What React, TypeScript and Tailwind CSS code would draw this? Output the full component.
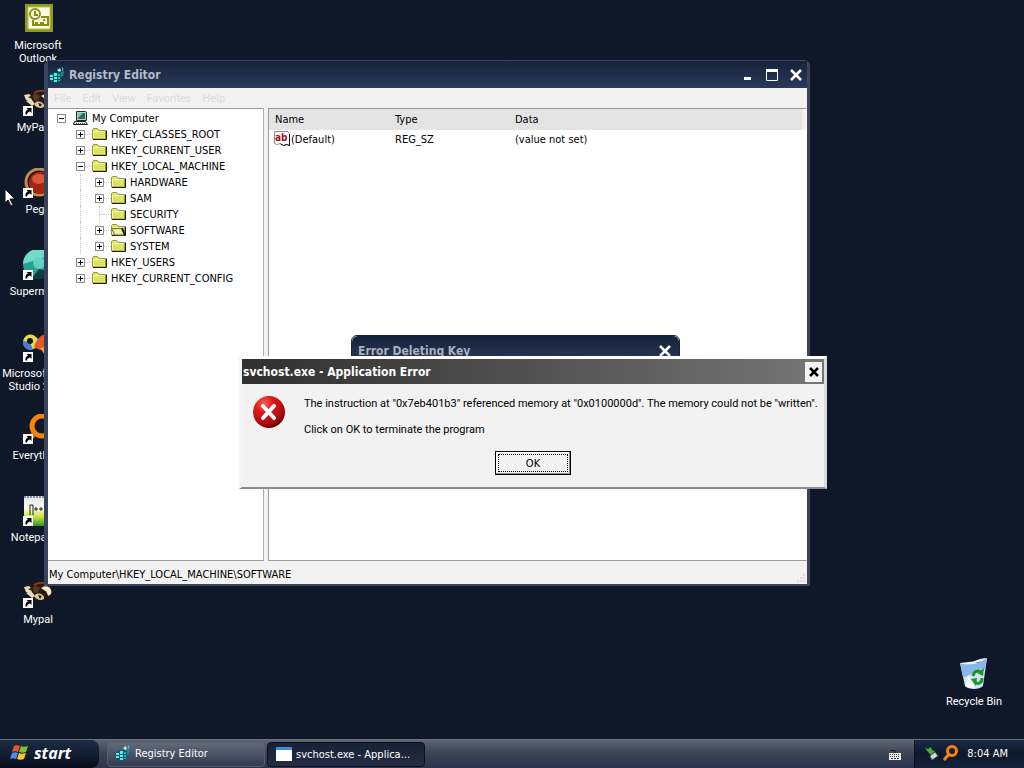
import { useState } from 'react';
import type { ReactNode } from 'react';
import clsx from 'clsx';

type TreeNode = {
  label: string;
  depth: number;
  icon: 'computer' | 'folder' | 'open';
  toggle?: 'plus' | 'minus';
};

const TREE: TreeNode[] = [
  { label: 'My Computer', depth: 0, icon: 'computer', toggle: 'minus' },
  { label: 'HKEY_CLASSES_ROOT', depth: 1, icon: 'folder', toggle: 'plus' },
  { label: 'HKEY_CURRENT_USER', depth: 1, icon: 'folder', toggle: 'plus' },
  { label: 'HKEY_LOCAL_MACHINE', depth: 1, icon: 'folder', toggle: 'minus' },
  { label: 'HARDWARE', depth: 2, icon: 'folder', toggle: 'plus' },
  { label: 'SAM', depth: 2, icon: 'folder', toggle: 'plus' },
  { label: 'SECURITY', depth: 2, icon: 'folder' },
  { label: 'SOFTWARE', depth: 2, icon: 'open', toggle: 'plus' },
  { label: 'SYSTEM', depth: 2, icon: 'folder', toggle: 'plus' },
  { label: 'HKEY_USERS', depth: 1, icon: 'folder', toggle: 'plus' },
  { label: 'HKEY_CURRENT_CONFIG', depth: 1, icon: 'folder', toggle: 'plus' },
];

const MENUS = ['File', 'Edit', 'View', 'Favorites', 'Help'];

/* ---------- icons ---------- */

function ShortcutArrow() {
  return (
    <g>
      <rect x="1" y="20" width="10" height="10" fill="#fff" />
      <path d="M3.500 28.500c-.5-2.500 .5-4 2.500-5l-1.500-1.500h5v5l-1.500-1.500c-2 .5-3 1.500-3 3z" fill="#000" />
    </g>
  );
}

function IconFrame({ children, shortcut = true }: { children: ReactNode; shortcut?: boolean }) {
  return (
    <svg viewBox="0 0 32 34" className="h-[34px] w-8 shrink-0" aria-hidden="true">
      {children}
      {shortcut && <ShortcutArrow />}
    </svg>
  );
}

function OutlookIcon() {
  return (
    <IconFrame shortcut={false}>
      <rect x="3" y="0" width="28" height="28" fill="#8f981c" />
      <rect x="6" y="3" width="22" height="22" fill="#fbfbe4" stroke="#b9c04a" />
      <g fill="none" stroke="#8a8f14" strokeWidth="2">
        <circle cx="13" cy="10" r="5" />
        <path d="M13 7v4h3" />
        <path d="M19 13h7v8H11v-5" />
        <path d="M13 19h3m2 0h4M22 15v2" />
      </g>
    </IconFrame>
  );
}

function RaccoonIcon() {
  return (
    <IconFrame>
      <path d="M5 9c3-4 6-4 9-3 5-3 12-2 15 2 2 4 1 8-2 11-3 4-8 5-12 3-5-2-9-6-10-13z" fill="#2a1710" />
      <path d="M2 9l5-1 2 2-3 1 4 2-2 3-4-2zM4 15l6-1 3 4-3 2z" fill="#e8ddb8" />
      <path d="M11 9c3-2 6-1 7 2l-3 4c-3 0-5-3-4-6z" fill="#5a3824" />
      <path d="M19 10c4-3 9-2 10 2 1 3 0 5-3 6 0-3-3-5-7-8z" fill="#f2e9c8" />
      <path d="M13 17c3-3 8-1 9 2s-4 4-7 2c-2-1-3-2-2-4z" fill="#d8c79a" />
      <path d="M16 17l4 1-2 3zM21 12l4 2-3 2z" fill="#22120c" />
      <path d="M12 7c5-3 13-3 16 1" stroke="#8c3d1c" strokeWidth="2" fill="none" />
    </IconFrame>
  );
}

function OrbIcon() {
  return (
    <IconFrame>
      <circle cx="17" cy="15" r="15" fill="#2b130c" />
      <circle cx="17" cy="14" r="13" fill="none" stroke="#b98c5a" strokeWidth="3" />
      <circle cx="18" cy="15" r="11" fill="#a8260f" />
      <ellipse cx="17" cy="11" rx="7" ry="5" fill="#d8563a" />
    </IconFrame>
  );
}

function SupermiumIcon() {
  return (
    <IconFrame>
      <circle cx="16" cy="14" r="15" fill="#27a08f" />
      <path d="M1 14A15 15 0 0 1 28 5l-11 4z" fill="#6fdcc9" />
      <path d="M10 28l7-9 12 3a15 15 0 0 1-19 6z" fill="#0c3c40" />
      <circle cx="17" cy="13" r="6" fill="#62d3c0" />
    </IconFrame>
  );
}

function StudioIcon() {
  return (
    <IconFrame>
      <path d="M1 10C2 2 10 0 15 6l5 5c-5 8-16 8-19-1z" fill="#e8dc4a" />
      <path d="M1 9c-1 6 4 10 10 9l-3-8z" fill="#4a7fd0" />
      <path d="M12 15C15 3 26-1 30 6c2 5-6 13-12 12z" fill="#e5582c" />
      <path d="M18 16l10-2c3 4-1 10-5 9z" fill="#f6a52a" />
      <circle cx="8" cy="9" r="3" fill="#0f1828" />
    </IconFrame>
  );
}

function SearchIcon() {
  return (
    <IconFrame>
      <circle cx="20" cy="12" r="10" fill="none" stroke="#f5830f" strokeWidth="5" />
      <path d="M12 20l-7 8" stroke="#d86a08" strokeWidth="5" />
    </IconFrame>
  );
}

function NotepadIcon() {
  return (
    <IconFrame>
      <defs>
        <linearGradient id="pad" x1="0" y1="0" x2="0" y2="1">
          <stop offset="0" stopColor="#dfe6ee" />
          <stop offset="0.400" stopColor="#fbfdf0" />
          <stop offset="0.700" stopColor="#cbe03c" />
          <stop offset="1" stopColor="#1f9a2c" />
        </linearGradient>
      </defs>
      <rect x="2" y="0" width="29" height="30" fill="url(#pad)" />
      <path d="M2 1h28" stroke="#8593a8" strokeWidth="2" strokeDasharray="2 1" />
      <path d="M8 19V9h3v10M12 13h4m-2-2v4M17 13h4m-2-2v4" stroke="#222" fill="none" />
    </IconFrame>
  );
}

function RecycleIcon() {
  return (
    <svg viewBox="0 3 32 34" className="h-[34px] w-8 shrink-0 overflow-visible" aria-hidden="true">
      <path d="M2 6l8 0 10 0 9-5-4 28c-4 4-14 4-18 0z" fill="#cfe3f8" />
      <path d="M2 6c8 3 18 2 27-5l-2 11C20 10 12 20 5 20z" fill="#8ab6ea" />
      <path d="M2 6c9 2 18 1 27-5-8 0-12 4-18 4z" fill="#f2f8fe" />
      <path d="M7 29l3-11 7 13c-4 0-8 0-10-2z" fill="#f2f8ff" />
      <g fill="none" stroke="#1f9426" strokeWidth="3">
        <path d="M15 19c1-5 5-6 8-4" />
        <path d="M24 21c0 5-4 7-7 4" />
      </g>
      <path d="M26 11l-1 8-6-3zM13 22l6-1-1 8z" fill="#1f9426" />
    </svg>
  );
}

function RegistryIcon() {
  return (
    <svg viewBox="0 0 16 16" className="size-4 shrink-0" aria-hidden="true">
      <path d="M0 8l5-3 7 1v8l-6 2-5-2z" fill="#0b5f68" />
      <path d="M1 8h3v2H1zM5 6h3v3H5zM5 10h3v2H5zM1 11h3v2H1zM5 13h3v2H5z" fill="#5fe8e6" />
      <path d="M9 7h2v2H9zM9 10h2v2H9zM9 13h2v1H9z" fill="#2fb5b8" />
      <path d="M8 3l3-2 1 3-2 1z" fill="#9df6f4" />
      <path d="M12 5l3-1-1 5-2 1z" fill="#178c96" />
      <path d="M13 0l1 2-1 2" stroke="#48d0d2" fill="none" />
    </svg>
  );
}

function ComputerIcon() {
  return (
    <svg viewBox="0 0 16 16" className="size-4 shrink-0" aria-hidden="true">
      <path d="M3.500 1.500h9l1 1v8h-10z" fill="#c8ccc8" stroke="#222" />
      <path d="M5 3h7v6H5z" fill="#1f6f68" />
      <path d="M5 3h5L5 8z" fill="#75c4b6" />
      <path d="M1.500 11.500h11l2 3H.5z" fill="#ddd" stroke="#222" />
      <path d="M3 13.500h9" stroke="#555" strokeDasharray="1 1" />
    </svg>
  );
}

function FolderIcon({ open }: { open: boolean }) {
  return (
    <svg viewBox="0 0 16 16" className="size-4 shrink-0" aria-hidden="true">
      <path d="M.5 13V3.500l1-1h4l1.500 2h6.500V13z" fill="#dde263" stroke="#96983c" />
      <path d="M1.500 12V5.500h11" stroke="#f6f8ae" fill="none" />
      <path d="M1 13.500h13.500V4.500" stroke="#1c1c10" fill="none" />
      {open && (
        <>
          <path d="M.5 6.500h10.500l2.500 6.500H4z" fill="#eef0a0" stroke="#6a6b26" />
          <path d="M11 6l3 7.500" stroke="#1c1c10" strokeWidth="2" />
        </>
      )}
    </svg>
  );
}

function StringValueIcon() {
  return (
    <svg viewBox="0 0 16 16" className="size-4 shrink-0" aria-hidden="true">
      <path d="M.5 .5h13l2 2v12l-3-1-3 1-3-2-4 1-2-1z" fill="#fff" stroke="#8a8a8a" />
      <path d="M15.500 3v11.500l-3-1-3 1-3-1.500" stroke="#111" fill="none" />
      <text x="1" y="10" fontSize="10" fontWeight="700" fill="#9c1420" fontFamily="DejaVu Sans Condensed, sans-serif">
        ab
      </text>
    </svg>
  );
}

function ErrorIcon() {
  return (
    <svg viewBox="0 0 34 34" className="size-[34px] shrink-0" aria-hidden="true">
      <defs>
        <radialGradient id="err" cx="0.350" cy="0.250" r="0.800">
          <stop offset="0" stopColor="#f0645c" />
          <stop offset="0.350" stopColor="#dc1a1a" />
          <stop offset="0.800" stopColor="#a80a0c" />
          <stop offset="1" stopColor="#5d0505" />
        </radialGradient>
      </defs>
      <circle cx="16" cy="17" r="16" fill="url(#err)" />
      <path d="M10 11l11 12M21 11L10 23" stroke="#fff" strokeWidth="4" strokeLinecap="round" />
    </svg>
  );
}

function WindowsFlag() {
  return (
    <svg viewBox="0 0 20 18" className="h-[18px] w-5 shrink-0" aria-hidden="true">
      <path d="M4 2c2-1 4-1 6 0L8 8C6 7 4 7 2 8z" fill="#e8572a" />
      <path d="M11 2c2 1 4 1 7 0l-2 6c-2 1-5 1-7 0z" fill="#7cc236" />
      <path d="M2 9c2-1 4-1 6 0l-2 6c-2-1-4-1-6 0z" fill="#4a8df0" />
      <path d="M9 9c2 1 4 1 7 0l-2 6c-2 1-5 1-7 0z" fill="#f7c52b" />
    </svg>
  );
}

function CloseGlyph() {
  return (
    <svg viewBox="0 0 12 12" className="size-3" aria-hidden="true">
      <path d="M1 1l10 10M11 1L1 11" stroke="currentColor" strokeWidth="2.500" />
    </svg>
  );
}

/* ---------- desktop ---------- */

const SHORTCUTS: { lines: string[]; icon: ReactNode }[] = [
  { lines: ['Microsoft', 'Outlook'], icon: <OutlookIcon /> },
  { lines: ['MyPal68'], icon: <RaccoonIcon /> },
  { lines: ['Pega'], icon: <OrbIcon /> },
  { lines: ['Supermium'], icon: <SupermiumIcon /> },
  { lines: ['Microsoft Visu', 'Studio 2008'], icon: <StudioIcon /> },
  { lines: ['Everything'], icon: <SearchIcon /> },
  { lines: ['Notepad++'], icon: <NotepadIcon /> },
  { lines: ['Mypal'], icon: <RaccoonIcon /> },
];

function DesktopIcon({ lines, icon }: { lines: string[]; icon: ReactNode }) {
  return (
    <button type="button" className="flex h-[82px] w-[76px] flex-col items-center font-['Roboto',sans-serif] text-white">
      {icon}
      <span className="flex flex-col items-center pt-px leading-[13px] whitespace-nowrap">
        {lines.map((line) => (
          <span key={line}>{line}</span>
        ))}
      </span>
    </button>
  );
}

/* ---------- registry editor ---------- */

function TreeRow({ node }: { node: TreeNode }) {
  return (
    <li className="flex h-4 items-center">
      {node.depth > 0 && <span className="w-[19px]" />}
      {node.depth > 1 && (
        <span className="flex h-4 w-[19px] pl-1">
          <i className="border-l border-dotted border-[#c4c4c4]" />
        </span>
      )}
      {node.toggle ? (
        <button
          type="button"
          aria-label={`Toggle ${node.label}`}
          className="flex size-[9px] shrink-0 items-center justify-center border border-[#8a8a8a] bg-white"
        >
          <svg viewBox="0 0 5 5" className="size-[5px]" aria-hidden="true">
            <path d={node.toggle === 'plus' ? 'M0 2h5v1H0zM2 0h1v5H2z' : 'M0 2h5v1H0z'} fill="#000" />
          </svg>
        </button>
      ) : (
        <span className="flex h-4 w-[9px] shrink-0 pl-1">
          <i className="border-l border-dotted border-[#c4c4c4]" />
          <i className="mt-2 flex-1 border-t border-dotted border-[#c4c4c4]" />
        </span>
      )}
      <span className={clsx('w-[7px] border-t border-dotted', node.depth > 0 ? 'border-[#c4c4c4]' : 'border-transparent')} />
      {node.icon === 'computer' ? <ComputerIcon /> : <FolderIcon open={node.icon === 'open'} />}
      <span className="pl-[3px] whitespace-nowrap">{node.label}</span>
    </li>
  );
}

function RegistryWindow() {
  return (
    <section
      aria-label="Registry Editor"
      className="absolute top-[60px] left-[44px] flex h-[526px] w-[766px] flex-col rounded-t-md border-t border-r-3 border-b-2 border-l-4 border-[#39435a] bg-[#f2f2f3]"
    >
      <header className="flex h-[27px] shrink-0 items-center gap-1 bg-linear-to-b from-[#16223a] to-[#2a3a5c] px-px">
        <RegistryIcon />
        <h1 className="flex-1 text-xs font-bold text-[#b4bac6]">Registry Editor</h1>
        <div className="flex gap-1 text-white">
          <button type="button" aria-label="Minimize" className="flex size-5 items-center justify-center">
            <svg viewBox="0 0 12 12" className="size-3" aria-hidden="true">
              <path d="M2 8h7v3H2z" fill="currentColor" />
            </svg>
          </button>
          <button type="button" aria-label="Maximize" className="flex size-5 items-center justify-center">
            <svg viewBox="0 0 12 12" className="size-3" aria-hidden="true">
              <path d="M.5 .5h11v11H.5z" fill="none" stroke="currentColor" />
              <path d="M0 0h12v3H0z" fill="currentColor" />
            </svg>
          </button>
          <button type="button" aria-label="Close" className="flex size-5 items-center justify-center">
            <CloseGlyph />
          </button>
        </div>
      </header>

      <nav className="flex h-5 shrink-0 items-center gap-[11px] px-[6px] font-['Roboto',sans-serif] text-[#dadada]">
        {MENUS.map((menu) => (
          <button key={menu} type="button">
            {menu}
          </button>
        ))}
      </nav>

      <div className="flex min-h-0 flex-1 gap-1">
        <div className="w-[216px] shrink-0 border-t border-r border-b border-[#9a9a9a] border-r-[#b0b0b0] bg-white pt-px pl-[9px]">
          <ul>
            {TREE.map((node) => (
              <TreeRow key={node.label} node={node} />
            ))}
          </ul>
        </div>
        <div className="flex-1 border border-[#9a9a9a] border-r-transparent bg-white">
          <table className="w-full table-fixed text-left">
            <thead>
              <tr className="h-[21px] bg-[#e4e4e4]">
                <th className="w-[120px] pl-[6px] font-normal">Name</th>
                <th className="w-[120px] pl-[6px] font-normal">Type</th>
                <th className="border-r-4 border-[#f0f0f0] pl-[6px] font-normal">Data</th>
              </tr>
            </thead>
            <tbody>
              <tr className="h-[18px]">
                <td className="pl-[5px]">
                  <span className="flex items-center gap-px">
                    <StringValueIcon />
                    (Default)
                  </span>
                </td>
                <td className="pl-[6px]">REG_SZ</td>
                <td className="pl-[6px]">(value not set)</td>
              </tr>
            </tbody>
          </table>
        </div>
      </div>

      <footer className="flex h-[23px] shrink-0 items-center justify-between pl-px">
        <span className="pt-1">My Computer\HKEY_LOCAL_MACHINE\SOFTWARE</span>
        <svg viewBox="0 0 12 12" className="size-3 self-end" aria-hidden="true">
          <path d="M8 2h2v2H8zM8 5h2v2H8zM5 5h2v2H5zM8 8h2v2H8zM5 8h2v2H5zM2 8h2v2H2z" fill="#dcdce0" />
        </svg>
      </footer>
    </section>
  );
}

/* ---------- dialogs ---------- */

function DeleteErrorDialog() {
  return (
    <section
      aria-label="Error Deleting Key"
      className="absolute top-[335px] left-[351px] w-[329px] rounded-t-md border border-[#1a2436] bg-[#f2f2f3] pb-12"
    >
      <header className="flex h-[30px] items-center justify-between rounded-t-md bg-linear-to-b from-[#16223a] to-[#2c3c5e] pr-2 pl-[6px]">
        <h2 className="text-xs font-bold text-[#aab1bf]">Error Deleting Key</h2>
        <button type="button" aria-label="Close" className="text-white">
          <CloseGlyph />
        </button>
      </header>
    </section>
  );
}

function AppErrorDialog({ onClose }: { onClose: () => void }) {
  return (
    <section
      role="alertdialog"
      aria-label="svchost.exe - Application Error"
      className="absolute top-[356px] left-[239px] w-[588px] border-t-3 border-r-3 border-b-2 border-l-3 border-t-white border-r-[#d8dade] border-b-[#8c8c8c] border-l-[#f4f4f4] bg-[#f2f2f2] text-black"
    >
      <header className="flex h-[25px] items-center justify-between bg-linear-to-r from-[#303030] to-[#767676] pr-[2px] pl-px">
        <h2 className="text-xs font-bold text-white">svchost.exe - Application Error</h2>
        <button
          type="button"
          aria-label="Close"
          onClick={onClose}
          className="flex h-5 w-[17px] items-center justify-center bg-[#f4f4f4]"
        >
          <svg viewBox="0 0 10 10" className="size-[10px]" aria-hidden="true">
            <path d="M1 1l8 8M9 1L1 9" stroke="#000" strokeWidth="2.500" />
          </svg>
        </button>
      </header>
      <div className="flex gap-[17px] pt-[11px] pl-[11px]">
        <ErrorIcon />
        <div className="flex flex-col gap-[13px] pt-[2px] font-['Roboto',sans-serif] whitespace-nowrap">
          <p>The instruction at "0x7eb401b3" referenced memory at "0x0100000d". The memory could not be "written".</p>
          <p>Click on OK to terminate the program</p>
        </div>
      </div>
      <div className="flex justify-center pt-[15px] pb-3">
        <button
          type="button"
          onClick={onClose}
          className="h-6 w-[76px] border border-black bg-[#f2f2f2] p-[2px] shadow-[inset_-1px_-1px_#8c8c8c,inset_1px_1px_#fff]"
        >
          <span className="flex h-full items-center justify-center border border-dotted border-black">OK</span>
        </button>
      </div>
    </section>
  );
}

/* ---------- taskbar ---------- */

function Taskbar() {
  return (
    <footer className="absolute inset-x-0 bottom-0 flex h-[29px] items-stretch border-t border-[#6a7180] bg-linear-to-b from-[#5d6472] via-[#3c4252] to-[#2c3350] text-white">
      <button
        type="button"
        className="flex w-[99px] items-center gap-1 rounded-r-lg bg-linear-to-b from-[#1c2c44] via-[#131f34] to-[#060c18] pb-[2px] pl-[10px]"
      >
        <WindowsFlag />
        <span className="font-['Open_Sans',sans-serif] text-base leading-5 font-bold italic">start</span>
      </button>
      <div className="flex flex-1 items-center gap-[2px] pl-2">
        <button
          type="button"
          className="flex h-[25px] w-[158px] items-center gap-1 rounded-sm border border-[#565e6e] bg-linear-to-b from-[#626978] to-[#343b50] pb-[2px] pl-[7px]"
        >
          <RegistryIcon />
          Registry Editor
        </button>
        <button
          type="button"
          className="flex h-[25px] w-[158px] items-center gap-1 rounded-sm border border-[#0a101c] bg-linear-to-b from-[#182236] to-[#232c42] pl-2"
        >
          <svg viewBox="0 0 16 14" className="h-[14px] w-4 shrink-0" aria-hidden="true">
            <path d="M0 0h16v14H0z" fill="#fff" />
            <path d="M0 0h16v3H0z" fill="#3a8ee0" />
          </svg>
          svchost.exe - Applica...
        </button>
      </div>
      <div className="flex items-center pr-3">
        <svg viewBox="0 0 14 14" className="size-[14px]" aria-label="Keyboard layout">
          <path d="M1 6h12v7H1z" fill="#f0f0f0" />
          <path d="M2 7.500h10M2 9.500h10" stroke="#333" strokeDasharray="1 1" />
          <path d="M3 11.500h8" stroke="#333" strokeDasharray="2 1" />
          <path d="M7 6V3.500H3" stroke="#15181f" fill="none" />
        </svg>
      </div>
      <div className="flex items-center gap-1 border-l border-[#0a101c] bg-linear-to-b from-[#1c2c44] via-[#0e182a] to-[#14233c] pr-4 pb-[2px] pl-[10px]">
        <svg viewBox="0 0 14 14" className="size-[14px]" aria-hidden="true">
          <path d="M0 2l3 1 3-2 1 3 3 1-4 4-3-3z" fill="#3fae3c" />
          <path d="M5 10l5-4 3 4-6 4z" fill="#d7dad2" stroke="#555" />
        </svg>
        <svg viewBox="0 0 16 16" className="size-4" aria-hidden="true">
          <circle cx="9" cy="6" r="4.500" fill="none" stroke="#f5831a" strokeWidth="3" />
          <path d="M6 9l-5 6" stroke="#f5831a" strokeWidth="3" />
        </svg>
        <time className="pl-1">8:04 AM</time>
      </div>
    </footer>
  );
}

export default function App() {
  const [errorOpen, setErrorOpen] = useState(true);

  return (
    <main className="relative h-screen overflow-hidden bg-[#0f1828] font-['DejaVu_Sans_Condensed','Noto_Sans',sans-serif] text-[11px] leading-[13px]">
      <div className="flex h-full items-start justify-between pt-1">
        <div className="flex flex-col">
          {SHORTCUTS.map((item) => (
            <DesktopIcon key={item.lines.join(' ')} {...item} />
          ))}
        </div>
        <div className="self-end pr-3 pb-[26px]">
          <DesktopIcon lines={['Recycle Bin']} icon={<RecycleIcon />} />
        </div>
      </div>

      <RegistryWindow />
      <DeleteErrorDialog />
      {errorOpen && <AppErrorDialog onClose={() => setErrorOpen(false)} />}

      <svg viewBox="0 0 12 19" className="absolute top-[188px] left-1 h-[19px] w-3" aria-hidden="true">
        <path d="M1 1v14l3-3 3 6 2-1-3-6h5z" fill="#fff" stroke="#111" />
      </svg>

      <Taskbar />
    </main>
  );
}
